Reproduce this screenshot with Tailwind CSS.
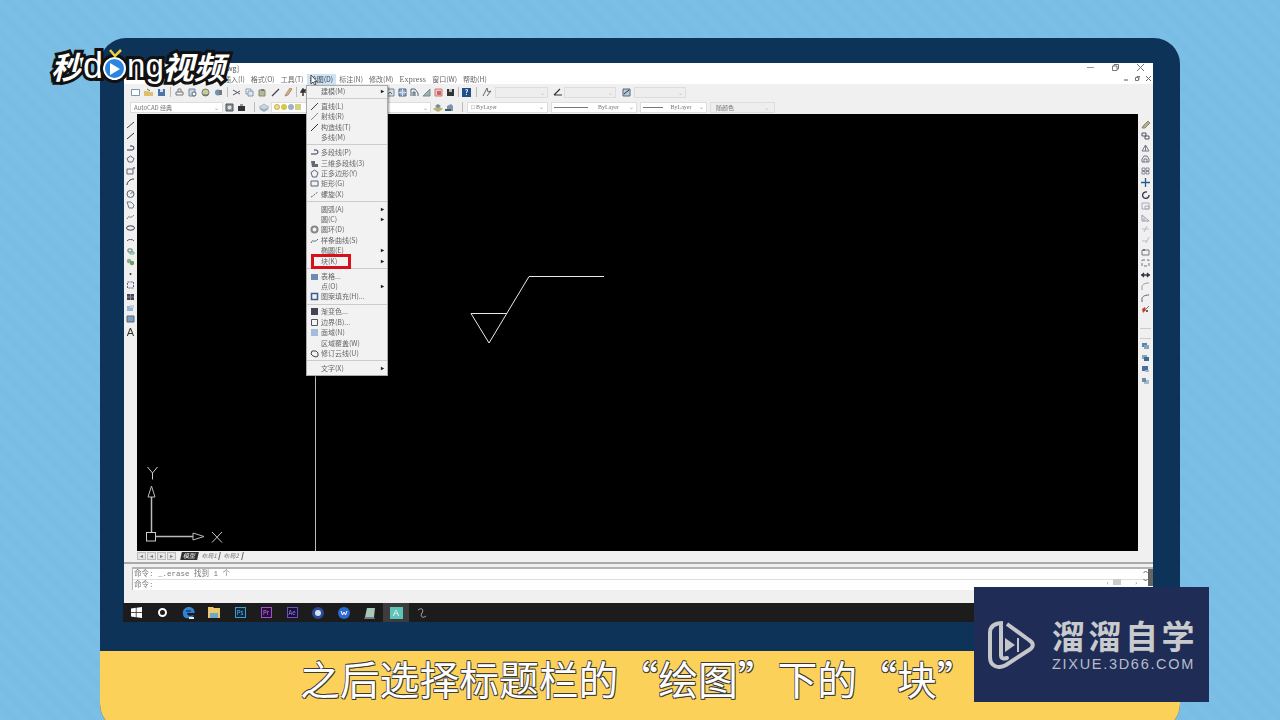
<!DOCTYPE html>
<html lang="zh">
<head>
    <meta charset="UTF-8">
    <title>AutoCAD 块</title>
    <script src="https://cdn.jsdelivr.net/npm/@tailwindcss/browser@4"></script>
</head>
<body class="w-[1280px] h-[720px] overflow-hidden relative bg-[#7bbee6] font-['Noto_Sans_CJK_SC','Liberation_Sans',sans-serif] bg-[repeating-linear-gradient(45deg,#7bbee6_0,#7bbee6_7px,#79bce4_7px,#79bce4_14px)]">

<!-- monitor -->
<div class="absolute left-[100px] top-[38px] w-[1080px] h-[692px] bg-[#0d3359] rounded-[26px] overflow-hidden flex flex-col">
    <div class="ml-[24px] mt-[25px] w-[1029px] h-[559px] flex flex-col bg-[#f0f0f0] text-[#444] relative blur-[0.45px] shrink-0">

        <!-- title + menu -->
        <div class="h-[21px] bg-white relative shrink-0">
            <span class="absolute left-[103px] top-0 text-[7px] leading-[10px] text-[#555]">wg]</span>
            <div class="absolute left-[100px] top-[11px] flex items-center gap-[6px] text-[7px] leading-[11px] text-[#666]">
                <span>插入(I)</span><span>格式(O)</span><span>工具(T)</span>
                <span class="bg-[#cce4f7] px-[3px] -mx-[3px] text-[#444]">绘图(D)</span>
                <span>标注(N)</span><span>修改(M)</span><span class="font-['Liberation_Serif',serif] text-[8px] tracking-[0.2px]">Express</span><span>窗口(W)</span><span>帮助(H)</span>
            </div>
            <svg class="absolute left-[186px] top-[12px]" width="8" height="11" viewBox="0 0 8 11"><path d="M1 0v9l2-2 1.500 3 1.500-.7L4.500 6.500H7z" fill="#fff" stroke="#333" stroke-width=".8"/></svg>
            <div class="absolute right-[9px] top-[1px] flex items-center gap-[18px]">
                <svg width="7" height="7" viewBox="0 0 7 7"><path d="M0 3.500h7" stroke="#999"/></svg>
                <svg width="7" height="7" viewBox="0 0 7 7" fill="none" stroke="#777"><path d="M.5 2h4.500v4.500h-4.500zM2 2V.5h4.500V5H5"/></svg>
                <svg width="7" height="7" viewBox="0 0 7 7" stroke="#777"><path d="M0 0l7 7M7 0L0 7"/></svg>
            </div>
            <div class="absolute right-[2px] top-[13px] flex items-center gap-[6px]">
                <svg width="5" height="5" viewBox="0 0 5 5"><path d="M0 4h4" stroke="#555"/></svg>
                <svg width="5" height="5" viewBox="0 0 5 5" fill="none" stroke="#777"><path d="M.5 1.500h3v3h-3zM2 1.500V.5h3v3"/></svg>
                <svg width="5" height="5" viewBox="0 0 5 5" stroke="#666"><path d="M0 0l5 5M5 0L0 5"/></svg>
            </div>
        </div>

        <!-- toolbars -->
        <div class="h-[30px] shrink-0 flex flex-col pt-[2px] gap-[3px] text-[6px] text-[#777]">
            <div class="h-[12px] flex items-center pl-[7px] gap-[4px]">
                <svg width="9" height="9" viewBox="0 0 9 9" fill="#fff" stroke="#7a94b4"><path d="M.5 1.500h8v6h-8z"/></svg>
                <svg width="9" height="9" viewBox="0 0 9 9"><path d="M0 3h4l1 1h4v4H0z" fill="#dcc06a"/><path d="M3 1l3 2" stroke="#667"/></svg>
                <svg width="9" height="9" viewBox="0 0 9 9"><path d="M1 1h7v7H1z" fill="#4c74a8"/><path d="M3 1h3v3H3z" fill="#dde"/></svg>
                <i class="w-px h-[10px] bg-[#bbb]"></i>
                <svg width="9" height="9" viewBox="0 0 9 9" fill="none" stroke="#777"><path d="M1 4h7v3H1zM3 4V1h3v3"/></svg>
                <svg width="9" height="9" viewBox="0 0 9 9"><path d="M1 1h6v7H1z" fill="#c8d4e0" stroke="#789"/><circle cx="6" cy="6" r="2" fill="#fff" stroke="#567"/></svg>
                <svg width="9" height="9" viewBox="0 0 9 9"><circle cx="4.500" cy="4.500" r="3.500" fill="#c8cc90" stroke="#777"/><path d="M2 7h5" stroke="#567"/></svg>
                <svg width="9" height="9" viewBox="0 0 9 9"><circle cx="4" cy="4.500" r="3" fill="#6a94b0"/><path d="M5 2h3v5H5z" fill="#777"/></svg>
                <i class="w-px h-[10px] bg-[#bbb]"></i>
                <svg width="9" height="9" viewBox="0 0 9 9" fill="none" stroke="#556"><path d="M1 2l7 4M1 7l7-4"/></svg>
                <svg width="9" height="9" viewBox="0 0 9 9"><path d="M1 1h5v5H1z" fill="#fff" stroke="#89a"/><path d="M3 3h5v5H3z" fill="#dde6f0" stroke="#89a"/></svg>
                <svg width="9" height="9" viewBox="0 0 9 9"><path d="M1 2h6v6H1z" fill="#b8b890" stroke="#887"/><path d="M3 1h3v2H3z" fill="#778"/></svg>
                <svg width="9" height="9" viewBox="0 0 9 9" fill="none" stroke="#445" stroke-width="1.300"><path d="M1 8l7-7"/></svg>
                <svg width="9" height="9" viewBox="0 0 9 9"><path d="M1 8l3-1 4-6-2-1-4 6z" fill="#d8b860" stroke="#a88"/></svg>
                <i class="w-px h-[10px] bg-[#bbb] -ml-[1px]"></i>
                <svg class="-ml-[1px]" width="9" height="9" viewBox="0 0 9 9" fill="none" stroke="#333" stroke-width="1.500"><path d="M3 8V4a2 2 0 012-2h3M3 1L1 4h4z"/></svg>
                <div class="ml-[73px] flex items-center gap-[3px]">
                    <svg width="9" height="9" viewBox="0 0 9 9"><path d="M1 1h7v7H1z" fill="#d8e0e8" stroke="#789"/><path d="M2 6l2-2 2 2" stroke="#567" fill="none"/></svg>
                    <svg width="9" height="9" viewBox="0 0 9 9"><path d="M1 1h7v7H1z" fill="#8eb0d4" stroke="#567"/><path d="M4.500 1v7M1 4.500h7" stroke="#dde"/></svg>
                    <svg width="9" height="9" viewBox="0 0 9 9" fill="none" stroke="#567"><path d="M1 8V1h4l3 4v3"/><path d="M3 8V4h2v4" fill="#9cb"/></svg>
                    <svg width="9" height="9" viewBox="0 0 9 9"><path d="M1 8l7-7v7z" fill="#9ab4a8" stroke="#789"/></svg>
                    <svg width="9" height="9" viewBox="0 0 9 9"><path d="M1 1h7v7H1z" fill="#e8c8c8" stroke="#c77"/><path d="M3 3h4v4H3z" fill="#c66"/></svg>
                    <svg width="9" height="9" viewBox="0 0 9 9"><path d="M1 1h7v7H1z" fill="#333"/><path d="M3 1h3v3H3z" fill="#bbb"/></svg>
                    <i class="w-px h-[10px] bg-[#bbb]"></i>
                    <span class="w-[9px] h-[9px] bg-[#1f4f86] text-white text-[7px] leading-[9px] text-center font-bold">?</span>
                    <i class="w-px h-[10px] bg-[#bbb] mx-[2px]"></i>
                    <svg width="10" height="10" viewBox="0 0 10 10" fill="none" stroke="#666"><path d="M1 9l4-8 1 4 3-1-4 5"/></svg>
                    <div class="w-[53px] h-[11px] bg-[#eee] border border-[#ddd] flex items-center justify-end pr-[2px] text-[#bbb]">⌄</div>
                    <svg class="ml-[2px]" width="10" height="10" viewBox="0 0 10 10" fill="none" stroke="#333" stroke-width="1.200"><path d="M1 8h8M1 8l6-6"/></svg>
                    <div class="-ml-[2px] w-[52px] h-[11px] bg-[#eee] border border-[#ddd] flex items-center justify-end pr-[2px] text-[#bbb]">⌄</div>
                    <svg class="ml-[3px]" width="9" height="9" viewBox="0 0 9 9"><path d="M1 1h7v7H1z" fill="#b8c8d8" stroke="#567"/><path d="M2 6l5-4" stroke="#234"/></svg>
                    <div class="w-[52px] h-[11px] bg-[#eee] border border-[#ddd] flex items-center justify-end pr-[2px] text-[#bbb]">⌄</div>
                </div>
            </div>
            <div class="h-[12px] flex items-center pl-[6px]">
                <div class="w-[93px] h-[11px] bg-white border border-[#ddd] flex items-center justify-between px-[3px]"><span>AutoCAD 经典</span><span class="text-[#999]">⌄</span></div>
                <svg class="ml-[2px]" width="9" height="9" viewBox="0 0 9 9"><path d="M1 1h7v7H1z" fill="#7c9090" stroke="#555"/><circle cx="4.500" cy="4.500" r="2" fill="#dde"/></svg>
                <svg class="ml-[3px]" width="9" height="9" viewBox="0 0 9 9"><path d="M1 3h7v5H1z" fill="#333"/><path d="M3 1h3v2H3z" fill="#999"/></svg>
                <i class="w-px h-[10px] bg-[#bbb] ml-[8px]"></i>
                <svg class="ml-[4px]" width="10" height="9" viewBox="0 0 10 9"><path d="M0 6l5-3 5 3-5 3z" fill="#9fb0c4"/><path d="M0 4l5-3 5 3-5 3z" fill="#c8d4e0" stroke="#89a" stroke-width=".5"/></svg>
                <div class="ml-[2px] w-[160px] h-[11px] bg-white border border-[#ddd] flex items-center gap-[1px] px-[2px]">
                    <i class="w-[6px] h-[6px] rounded-full bg-[#f0e070] border border-[#ca5]"></i><i class="w-[6px] h-[6px] rounded-full bg-[#d8c648]"></i><i class="w-[6px] h-[6px] rounded-full bg-[#9fb0c4]"></i><i class="w-[6px] h-[6px] bg-[#d8d080]"></i>
                    <span class="ml-auto text-[#999]">⌄</span>
                </div>
                <svg class="ml-[2px]" width="10" height="9" viewBox="0 0 10 9"><path d="M0 6l5-3 5 3-5 3z" fill="#b8b26a"/><path d="M2 3l3-2 3 2-3 2z" fill="#6a8ca8"/></svg>
                <svg class="ml-[2px]" width="10" height="9" viewBox="0 0 10 9"><path d="M2 8V3l4-2 2 2v5z" fill="#7c94ae"/><path d="M0 6h6v2H0z" fill="#456"/></svg>
                <i class="w-px h-[10px] bg-[#bbb] ml-[7px]"></i>
                <div class="ml-[4px] w-[81px] h-[11px] bg-white border border-[#ddd] flex items-center justify-between px-[3px] font-['Liberation_Serif',serif]"><span>□ ByLayer</span><span class="text-[#999]">⌄</span></div>
                <div class="ml-[3px] w-[86px] h-[11px] bg-white border border-[#ddd] flex items-center justify-between px-[2px] font-['Liberation_Serif',serif]"><i class="w-[34px] h-px bg-[#777]"></i><span>ByLayer</span><span class="text-[#999]">⌄</span></div>
                <div class="ml-[3px] w-[67px] h-[11px] bg-white border border-[#ddd] flex items-center justify-between px-[2px] font-['Liberation_Serif',serif]"><i class="w-[20px] h-px bg-[#777]"></i><span>ByLayer</span><span class="text-[#999]">⌄</span></div>
                <div class="ml-[3px] w-[65px] h-[11px] bg-[#eee] border border-[#ddd] flex items-center justify-between px-[5px]"><span>随颜色</span><span class="text-[#bbb]">⌄</span></div>
            </div>
        </div>

        <!-- workspace -->
        <div class="h-[448px] shrink-0 flex">
            <div class="w-[13px] shrink-0 flex flex-col items-center pt-[7px] gap-[3.450px]">
                <svg width="9" height="8" viewBox="0 0 9 8"><path d="M1 7l7-6" stroke="#444"/></svg>
                <svg width="9" height="8" viewBox="0 0 9 8"><path d="M1 7l7-6" stroke="#333"/></svg>
                <svg width="9" height="8" viewBox="0 0 9 8" fill="none"><path d="M1 6h5a2 2 0 000-4H4" stroke="#335"/></svg>
                <svg width="9" height="8" viewBox="0 0 9 8" fill="none"><path d="M4.500 1L8 3.500 6.500 7h-4L1 3.500z" stroke="#667"/></svg>
                <svg width="9" height="8" viewBox="0 0 9 8" fill="none"><path d="M1 2h6v5H1z" stroke="#667"/><path d="M7 1h2" stroke="#223"/></svg>
                <svg width="9" height="8" viewBox="0 0 9 8" fill="none"><path d="M1 7C1 4 4 1 8 1" stroke="#334"/></svg>
                <svg width="9" height="8" viewBox="0 0 9 8" fill="none"><circle cx="4.500" cy="4" r="3.500" stroke="#567"/><path d="M4.500 4l2-2" stroke="#567"/></svg>
                <svg width="9" height="8" viewBox="0 0 9 8" fill="none"><path d="M1 1h4l3 3-1 3H3z" stroke="#778"/></svg>
                <svg width="9" height="8" viewBox="0 0 9 8" fill="none"><path d="M1 6c2-5 3 1 7-4" stroke="#778"/></svg>
                <svg width="9" height="8" viewBox="0 0 9 8" fill="none"><ellipse cx="4.500" cy="4" rx="4" ry="2.200" stroke="#334"/></svg>
                <svg width="9" height="8" viewBox="0 0 9 8" fill="none"><path d="M1 6a4 3 0 017 0" stroke="#556"/></svg>
                <svg width="9" height="8" viewBox="0 0 9 8" fill="none"><path d="M2 2h4v3H2z" stroke="#677"/><path d="M4 5h4v2H4z" stroke="#6a8"/></svg>
                <svg width="9" height="8" viewBox="0 0 9 8"><circle cx="3" cy="3" r="2.200" fill="#8ab088"/><circle cx="6" cy="5" r="2.200" fill="#6a9a70"/></svg>
                <svg width="9" height="8" viewBox="0 0 9 8"><circle cx="4.500" cy="4" r="1" fill="#333"/></svg>
                <svg width="9" height="8" viewBox="0 0 9 8" fill="none"><path d="M1.500 1h6v6h-6z" stroke="#568" stroke-dasharray="2 1"/></svg>
                <svg width="9" height="8" viewBox="0 0 9 8"><path d="M1 1h7v6H1z" fill="#445"/><path d="M1 4h7M4.500 1v6" stroke="#889"/></svg>
                <svg width="9" height="8" viewBox="0 0 9 8"><path d="M1 2h6v5H1z" fill="#9cb4d0"/><path d="M4 1h4v3H4z" fill="#c4d0dc"/></svg>
                <svg width="9" height="8" viewBox="0 0 9 8"><path d="M1 1h7v6H1z" fill="#7c9cc4" stroke="#567"/></svg>
                <span class="text-[11px] leading-[10px] font-['Liberation_Sans',sans-serif] text-[#333]">A</span>
            </div>

            <div class="flex-1 flex flex-col min-w-0">
                <div class="h-[437px] shrink-0 bg-black relative">
                    <!-- drawing -->
                    <svg class="absolute inset-0" width="1001" height="437" viewBox="0 0 1001 437" fill="none" stroke="#e8e8e8" stroke-width="1">
                        <path d="M178.500 0V437" stroke="#bbb"/>
                        <path d="M467 162.500H392L352 229L334 199.500H370"/>
                        <path d="M14.500 418V383M19 422.500H56" stroke="#bbb" stroke-width="1.500"/>
                        <rect x="9.500" y="418.500" width="9" height="8.500" stroke="#ccc"/>
                        <path d="M14.500 372l-3.500 11h7zM56 419l11 3.500-11 3.500z" stroke="#bbb"/>
                        <path d="M10.500 353l5 6 5-6M15.500 359v6.500M75 418l10 10.500M85 418L75 428.500" stroke="#ccc"/>
                    </svg>
                </div>
                <!-- layout tabs -->
                <div class="h-[11px] flex items-center text-[6px] text-[#777] gap-[1px] pb-[1px]">
                    <span class="w-[9px] h-[8px] bg-[#e4e4e4] border border-[#bbb] text-center leading-[6px]">◂</span><span class="w-[9px] h-[8px] bg-[#e4e4e4] border border-[#bbb] text-center leading-[6px]">◂</span><span class="w-[9px] h-[8px] bg-[#e4e4e4] border border-[#bbb] text-center leading-[6px]">▸</span><span class="w-[9px] h-[8px] bg-[#e4e4e4] border border-[#bbb] text-center leading-[6px]">▸</span>
                    <span class="ml-[4px] bg-[#333] text-white w-[17px] text-center leading-[8px] -skew-x-12">模型</span>
                    <span class="ml-[1px] w-[20px] text-center leading-[8px] border-r border-[#666] -skew-x-12">布局1</span>
                    <span class="w-[22px] text-center leading-[8px] border-r border-[#666] -skew-x-12">布局2</span>
                </div>
            </div>

            <div class="w-[15px] shrink-0 flex flex-col items-center pt-[7px] gap-[3.450px]">
                <svg width="9" height="8" viewBox="0 0 9 8"><path d="M1 7l1-2 5-5 2 2-5 5z" fill="#b7b083" stroke="#887"/></svg>
                <svg width="9" height="8" viewBox="0 0 9 8" fill="none" stroke="#556"><path d="M1 1h4v3H1zM4 4h4v3H4z"/></svg>
                <svg width="9" height="8" viewBox="0 0 9 8" fill="none" stroke="#778"><path d="M4.500 1L8 7H1zM4.500 1v6"/></svg>
                <svg width="9" height="8" viewBox="0 0 9 8" fill="none" stroke="#778"><path d="M1 7V4l2-3h3l2 3v3zM3 7V4h3v3"/></svg>
                <svg width="9" height="8" viewBox="0 0 9 8" fill="none" stroke="#889"><path d="M1 1h3v2.500H1zM5 1h3v2.500H5zM1 4.500h3V7H1zM5 4.500h3V7H5z"/></svg>
                <svg width="9" height="9" viewBox="0 0 9 9" fill="none" stroke="#2c5c8c" stroke-width="1.300"><path d="M4.500 0v9M0 4.500h9"/></svg>
                <svg width="9" height="8" viewBox="0 0 9 8" fill="none" stroke="#334" stroke-width="1.300"><path d="M6 1.200A3.200 3.200 0 108 4"/></svg>
                <svg width="9" height="8" viewBox="0 0 9 8" fill="none" stroke="#aab"><path d="M1 1h7v6H1zM4 4h4v3H4z"/></svg>
                <svg width="9" height="8" viewBox="0 0 9 8" fill="none" stroke="#99a"><path d="M1 7V1l7 6zM3 7V4"/></svg>
                <svg width="9" height="8" viewBox="0 0 9 8" fill="none" stroke="#bbc"><path d="M1 4h7M6 1L3 7"/></svg>
                <svg width="9" height="8" viewBox="0 0 9 8" fill="none" stroke="#bbc"><path d="M1 5h5M8 1L5 7"/></svg>
                <svg width="9" height="8" viewBox="0 0 9 8" fill="none" stroke="#778"><path d="M1 2h7v5H1z"/><path d="M3 1v2" stroke="#333"/></svg>
                <svg width="9" height="8" viewBox="0 0 9 8" fill="none" stroke="#778" stroke-dasharray="3 2"><path d="M1 1h7v6H1z"/></svg>
                <svg width="9" height="8" viewBox="0 0 9 8" fill="none" stroke="#334" stroke-width="1.300"><path d="M0 4h9M3 2L1 4l2 2M6 2l2 2-2 2"/></svg>
                <svg width="9" height="8" viewBox="0 0 9 8" fill="none" stroke="#999"><path d="M1 8V5c0-2 2-4 7-4"/></svg>
                <svg width="9" height="8" viewBox="0 0 9 8" fill="none" stroke="#567"><path d="M1 8V5c0-2 2-4 7-4"/></svg>
                <svg width="9" height="8" viewBox="0 0 9 8"><path d="M1 4l3-2 1 3-3 3z" fill="#c04030"/><path d="M5 4l3-3" stroke="#777"/><circle cx="6" cy="6" r="1" fill="#333"/></svg>
                <i class="w-[11px] h-px bg-[#ccc] mt-[12px]"></i>
                <i class="w-[11px] h-px bg-[#ccc] mt-[5px]"></i>
                <svg width="9" height="8" viewBox="0 0 9 8"><path d="M1 1h5v4H1z" fill="#5c84a4"/><path d="M3 3h5v4H3z" fill="#86a4bc"/></svg>
                <svg width="9" height="8" viewBox="0 0 9 8"><path d="M1 1h5v4H1z" fill="#86a4bc"/><path d="M3 3h5v4H3z" fill="#3c6c94"/></svg>
                <svg width="9" height="8" viewBox="0 0 9 8"><path d="M1 1h6v5H1z" fill="#4c6ca0"/><path d="M4 5h4v2H4z" fill="#a4b4c8"/></svg>
                <svg width="9" height="8" viewBox="0 0 9 8"><path d="M3 3h5v4H3z" fill="#a4b8c8"/><path d="M1 1h4v4H1z" fill="#6c8ca8"/></svg>
            </div>
        </div>

        <!-- command line -->
        <div class="h-[41px] shrink-0 flex flex-col border-t-2 border-[#aaa] pt-[3px] relative">
            <div class="ml-[8px] h-[23px] bg-white border-l border-t-2 border-[#b4b4b4] text-[7.500px] text-[#777] font-['Liberation_Mono','Noto_Sans_CJK_SC',monospace]">
                <div class="h-[11px] leading-[10px] pl-[1px] border-b border-[#ddd]">命令: _.erase 找到 1 个</div>
                <div class="h-[10px] leading-[10px] pl-[1px]">命令:</div>
            </div>
            <svg class="absolute right-[5px] top-[6px]" width="5" height="12" viewBox="0 0 5 12" fill="none" stroke="#666"><path d="M.5 3l2-2 2 2M.5 9l2 2 2-2"/></svg>
            <i class="absolute right-0 top-[5px] w-[5px] h-[17px] bg-[#666]"></i>
            <div class="absolute left-[983px] top-[15px] w-[30px] h-[6px] flex items-center justify-between text-[6px] text-[#666]"><span>‹</span><i class="w-[8px] h-[6px] bg-[#ccc] -ml-[10px]"></i><span>›</span></div>
        </div>
        <!-- taskbar -->
        <div class="h-[19px] shrink-0 bg-[#1c1c1c] flex items-center -ml-px">
            <div class="w-[26px] h-[19px] flex items-center justify-center"><svg width="11" height="11" viewBox="0 0 11 11" fill="#fff"><path d="M0 1.500l4.800-.7v4.300H0zM5.500.7L11 0v5.100H5.500zM0 5.800h4.800v4.400L0 9.500zM5.500 5.800H11V11l-5.500-.8z"/></svg></div>
            <div class="w-[26px] h-[19px] flex items-center justify-center"><i class="w-[9px] h-[9px] rounded-full border-[2px] border-white"></i></div>
            <div class="w-[26px] h-[19px] flex items-center justify-center"><svg width="13" height="13" viewBox="0 0 13 13"><path d="M2 11C-1 6 2 1 7 1c4 0 6 3 5.500 6H5c0 3 4 3.500 7 2-2 4-8 4-10 2z" fill="#2f84d6"/><path d="M4 5h5" stroke="#1c1c1c"/><path d="M7 11h5v2H7z" fill="#eee"/></svg></div>
            <div class="w-[26px] h-[19px] flex items-center justify-center"><svg width="12" height="11" viewBox="0 0 12 11"><path d="M0 0h5l1 1h6v10H0z" fill="#eac86c"/><path d="M2 6h8v5H2z" fill="#6ea8c8"/></svg></div>
            <div class="w-[26px] h-[19px] flex items-center justify-center"><span class="w-[11px] h-[11px] bg-[#0d2a40] border border-[#3c9bd0] text-[6px] leading-[9px] text-center text-[#5fb6e6]">Ps</span></div>
            <div class="w-[26px] h-[19px] flex items-center justify-center"><span class="w-[11px] h-[11px] bg-[#2a0d3a] border border-[#a050d0] text-[6px] leading-[9px] text-center text-[#c080e8]">Pr</span></div>
            <div class="w-[26px] h-[19px] flex items-center justify-center"><span class="w-[11px] h-[11px] bg-[#1a0d3a] border border-[#6a50c0] text-[6px] leading-[9px] text-center text-[#a090f0]">Ae</span></div>
            <div class="w-[26px] h-[19px] flex items-center justify-center"><i class="w-[12px] h-[12px] rounded-full bg-[#d8e0f0] border-[3px] border-[#2a4a98]"></i></div>
            <div class="w-[26px] h-[19px] flex items-center justify-center"><svg width="12" height="12" viewBox="0 0 12 12"><circle cx="6" cy="6" r="6" fill="#2a6ad0"/><path d="M3 4l1.500 4L6 5l1.500 3L9 4" fill="none" stroke="#fff"/></svg></div>
            <div class="w-[26px] h-[19px] flex items-center justify-center"><svg width="12" height="12" viewBox="0 0 12 12"><path d="M3 1h8l-1 9H1z" fill="#a8c8b8"/><path d="M1 10h9l1 2H0z" fill="#778"/></svg></div>
            <div class="w-[26px] h-[19px] bg-[#3c3c3c] flex items-center justify-center"><span class="w-[13px] h-[12px] bg-[#5ec4b8] text-[9px] leading-[12px] text-center text-white font-['Liberation_Sans',sans-serif]">A</span></div>
            <div class="w-[26px] h-[19px] flex items-center justify-center"><svg width="12" height="12" viewBox="0 0 12 12" fill="none" stroke="#aaa"><path d="M2 3c4-3 6 0 4 3s0 6 4 3"/></svg></div>
        </div>

        <!-- draw menu -->
        <div class="absolute left-[182px] top-[22px] w-[82px] h-[291px] bg-[#f2f2f2] border border-[#aaa] shadow-[1px_1px_2px_rgba(0,0,0,.4)] text-[7px] leading-[10.400px] text-[#666]">
            <div class="flex flex-col">
                <div class="relative h-[10.400px] pl-[14px]">建模(M)<b class="absolute right-[3px] top-0 text-[#222] text-[6px]">▸</b></div>
                <hr class="border-[#ccc] my-[1.800px]">
                <div class="relative h-[10.400px] pl-[14px]"><svg class="absolute left-[3px] top-[1px]" width="9" height="9" viewBox="0 0 9 9"><path d="M1 8l7-7" stroke="#345"/></svg>直线(L)</div>
                <div class="relative h-[10.400px] pl-[14px]"><svg class="absolute left-[3px] top-[1px]" width="9" height="9" viewBox="0 0 9 9"><path d="M1 8l7-7" stroke="#889"/></svg>射线(R)</div>
                <div class="relative h-[10.400px] pl-[14px]"><svg class="absolute left-[3px] top-[1px]" width="9" height="9" viewBox="0 0 9 9"><path d="M1 8l7-7" stroke="#234"/></svg>构造线(T)</div>
                <div class="relative h-[10.400px] pl-[14px]">多线(M)</div>
                <hr class="border-[#ccc] my-[1.800px]">
                <div class="relative h-[10.400px] pl-[14px]"><svg class="absolute left-[3px] top-[1px]" width="9" height="9" viewBox="0 0 9 9" fill="none"><path d="M1 6h5a2 2 0 000-4H4" stroke="#335"/></svg>多段线(P)</div>
                <div class="relative h-[10.400px] pl-[14px]"><svg class="absolute left-[3px] top-[1px]" width="9" height="9" viewBox="0 0 9 9"><path d="M1 2h4v3h3v3H2z" fill="#667"/></svg>三维多段线(3)</div>
                <div class="relative h-[10.400px] pl-[14px]"><svg class="absolute left-[3px] top-[1px]" width="9" height="9" viewBox="0 0 9 9" fill="none"><path d="M4.500 1L8 3.500 6.500 8h-4L1 3.500z" stroke="#567"/></svg>正多边形(Y)</div>
                <div class="relative h-[10.400px] pl-[14px]"><svg class="absolute left-[3px] top-[1px]" width="9" height="9" viewBox="0 0 9 9" fill="none"><path d="M1 2h7v5H1z" stroke="#567"/></svg>矩形(G)</div>
                <div class="relative h-[10.400px] pl-[14px]"><svg class="absolute left-[3px] top-[1px]" width="9" height="9" viewBox="0 0 9 9" fill="none"><path d="M1 7l2-1 2-2 3-2" stroke="#667" stroke-dasharray="2 1"/></svg>螺旋(X)</div>
                <hr class="border-[#ccc] my-[1.800px]">
                <div class="relative h-[10.400px] pl-[14px]">圆弧(A)<b class="absolute right-[3px] top-0 text-[#222] text-[6px]">▸</b></div>
                <div class="relative h-[10.400px] pl-[14px]">圆(C)<b class="absolute right-[3px] top-0 text-[#222] text-[6px]">▸</b></div>
                <div class="relative h-[10.400px] pl-[14px]"><svg class="absolute left-[3px] top-[1px]" width="9" height="9" viewBox="0 0 9 9" fill="none"><circle cx="4.500" cy="4.500" r="3" stroke="#888" stroke-width="2"/></svg>圆环(D)</div>
                <div class="relative h-[10.400px] pl-[14px]"><svg class="absolute left-[3px] top-[1px]" width="9" height="9" viewBox="0 0 9 9" fill="none"><path d="M1 7c2-5 3 1 7-4" stroke="#567"/></svg>样条曲线(S)</div>
                <div class="relative h-[10.400px] pl-[14px]">椭圆(E)<b class="absolute right-[3px] top-0 text-[#222] text-[6px]">▸</b></div>
                <div class="relative h-[10.400px] pl-[14px]">块(K)<b class="absolute right-[3px] top-0 text-[#222] text-[6px]">▸</b></div>
                <hr class="border-[#ccc] my-[1.800px]">
                <div class="relative h-[10.400px] pl-[14px]"><svg class="absolute left-[3px] top-[1px]" width="9" height="9" viewBox="0 0 9 9"><path d="M1 2h7v6H1z" fill="#6c8cb8"/></svg>表格...</div>
                <div class="relative h-[10.400px] pl-[14px]">点(O)<b class="absolute right-[3px] top-0 text-[#222] text-[6px]">▸</b></div>
                <div class="relative h-[10.400px] pl-[14px]"><svg class="absolute left-[3px] top-[1px]" width="9" height="9" viewBox="0 0 9 9" fill="none"><path d="M1.500 1.500h6v6h-6z" stroke="#3c5c94" stroke-width="1.500"/></svg>图案填充(H)...</div>
                <hr class="border-[#ccc] my-[1.800px]">
                <div class="relative h-[10.400px] pl-[14px]"><svg class="absolute left-[3px] top-[1px]" width="9" height="9" viewBox="0 0 9 9"><path d="M1 1h7v7H1z" fill="#445"/></svg>渐变色...</div>
                <div class="relative h-[10.400px] pl-[14px]"><svg class="absolute left-[3px] top-[1px]" width="9" height="9" viewBox="0 0 9 9" fill="none"><path d="M1.500 1.500h6v6h-6z" stroke="#556"/></svg>边界(B)...</div>
                <div class="relative h-[10.400px] pl-[14px]"><svg class="absolute left-[3px] top-[1px]" width="9" height="9" viewBox="0 0 9 9"><path d="M1 1h7v7H1z" fill="#a4bcd8"/></svg>面域(N)</div>
                <div class="relative h-[10.400px] pl-[14px]">区域覆盖(W)</div>
                <div class="relative h-[10.400px] pl-[14px]"><svg class="absolute left-[3px] top-[1px]" width="9" height="9" viewBox="0 0 9 9" fill="none"><path d="M2 2h4l2 2v3l-2 1-3-1-2-2z" stroke="#445"/></svg>修订云线(U)</div>
                <hr class="border-[#ccc] my-[1.800px]">
                <div class="relative h-[10.400px] pl-[14px]">文字(X)<b class="absolute right-[3px] top-0 text-[#222] text-[6px]">▸</b></div>
            </div>
            <div class="absolute left-[4px] top-[168px] w-[40px] h-[15px] border-[3px] border-[#d8101c]"></div>
        </div>
    </div>

    <!-- caption band -->
    <div class="mt-[29px] flex-1 bg-[#fcd159] pl-[200px] pt-[2px]">
        <div class="text-[39.800px] leading-[50px] text-white font-normal whitespace-nowrap [text-shadow:1px_1px_0_#3a3a3a,-0.6px_-0.6px_0_#3a3a3a,0.6px_-0.6px_0_#3a3a3a,-0.6px_0.6px_0_#3a3a3a]">之后选择标题栏的“绘图”下的“块”</div>
    </div>
</div>

<!-- channel logo -->
<div class="absolute left-[51px] top-[46px] flex items-center h-[40px] font-bold text-white text-[31px] leading-[40px] [-webkit-text-stroke:6px_#111] [paint-order:stroke_fill] whitespace-nowrap">
    <span class="italic">秒</span>
    <span class="font-normal text-[36px] font-['Liberation_Sans',sans-serif] ml-[1px]">d</span>
    <span class="relative w-[23px] h-[23px] mt-[5px] rounded-full bg-[#2b86e0] border-[2px] border-white outline-[3px] outline-[#111] inline-flex items-center justify-center">
        <svg width="10" height="12" viewBox="0 0 10 12"><path d="M0 0l10 6-10 6z" fill="#fff"/></svg>
        <svg class="absolute -top-[10px] left-[4px]" width="13" height="10" viewBox="0 0 13 10" fill="none" stroke="#f4d03a" stroke-width="2.500"><path d="M1 1l5 6 6-6"/></svg>
    </span>
    <span class="font-normal text-[33px] font-['Liberation_Sans',sans-serif] ml-[1px]">ng</span>
    <span class="italic -ml-[1px]">视频</span>
</div>

<!-- watermark -->
<div class="absolute left-[974px] top-[587px] w-[235px] h-[115px] bg-[#1f2d56] flex items-center pl-[14px] gap-[17px]">
    <svg width="47" height="48" viewBox="0 0 47 48" fill="none" stroke="#c4c6ca" stroke-width="4" stroke-linejoin="round" class="shrink-0">
        <path d="M15 2C6 2 2 6 2 12V36C2 46 11 48 18 44L41 29C46 26 46 22 41 19L19 3"/>
        <path d="M13 5V34C13 38 16 38 19 37" stroke-linecap="round"/>
        <path d="M17 17l10 7-10 7z" fill="#c4c6ca" stroke="none"/>
        <path d="M30 17v14" stroke-width="2"/>
    </svg>
    <div class="flex flex-col text-[#c8cacd] w-[148px]">
        <div class="text-[33px] leading-[38px] font-bold tracking-[3.500px] whitespace-nowrap">溜溜自学</div>
        <div class="text-[14.500px] leading-[20px] tracking-[1.700px] text-[#b8bcc8] font-['Liberation_Sans',sans-serif] whitespace-nowrap">ZIXUE.3D66.COM</div>
    </div>
</div>
</body>
</html>
